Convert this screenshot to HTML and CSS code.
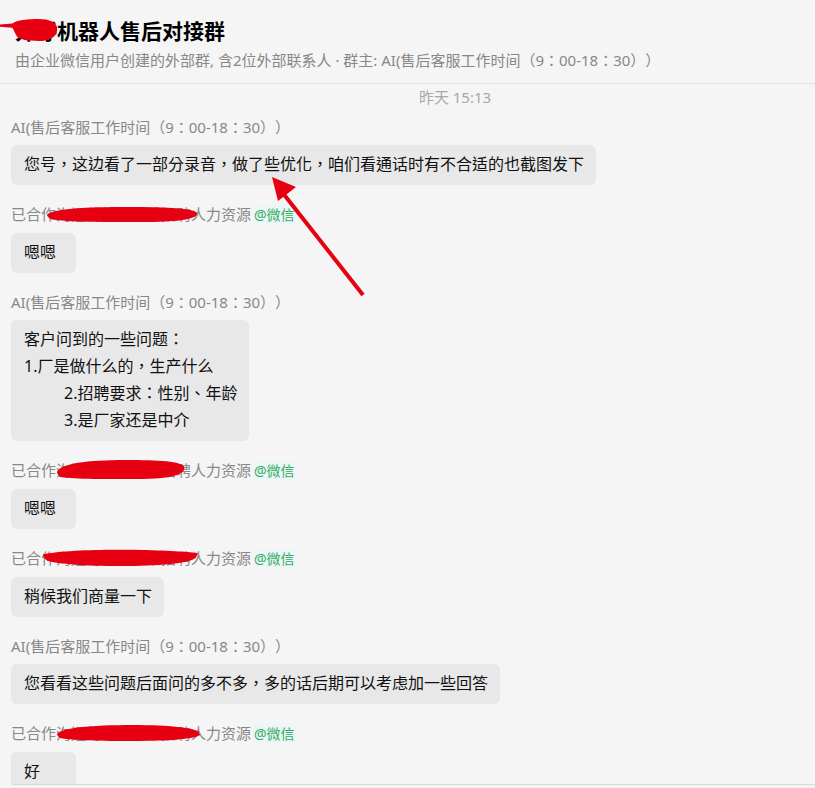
FILE: index.html
```html
<!DOCTYPE html>
<html lang="zh-CN">
<head>
    <meta charset="UTF-8">
    <meta name="viewport" content="width=device-width, initial-scale=1.0">
    <title>群聊</title>
    <link rel="stylesheet" href="styles.css">
</head>
<body>
    <div class="header">
        <div class="title">
            外呼机器人售后对接群
            <svg class="scribble title-scribble" viewBox="0 0 75 20" preserveAspectRatio="none">
                <path d="M0 5 L16 4 C22 1 36 0 50 0 C64 0 74 3 74 9 C74 16 64 20 50 20 C36 20 26 19 22 16 C19 13 18 10 16 8 L0 7 Z" />
            </svg>
        </div>
        <div class="subtitle">由企业微信用户创建的外部群, 含2位外部联系人 · 群主: AI(售后客服工作时间（9：00-18：30））</div>
    </div>

    <div class="chat">
        <div class="time">昨天 15:13</div>

        <div class="message">
            <div class="sender">AI(售后客服工作时间（9：00-18：30））</div>
            <div class="bubble">您号，这边看了一部分录音，做了些优化，咱们看通话时有不合适的也截图发下</div>
        </div>

        <div class="message">
            <div class="sender">
                已合作沟通的某某某某招聘人力资源<span class="tag">@微信</span>
                <svg class="scribble name-scribble s1" viewBox="0 0 150 16" preserveAspectRatio="none">
                    <path d="M0 8 C5 3 30 0 75 0 C115 0 145 1 150 6 C152 11 140 16 100 16 C60 16 20 16 4 13 C1 11 0 10 0 8 Z" />
                </svg>
            </div>
            <div class="bubble">嗯嗯</div>
        </div>

        <div class="message">
            <div class="sender">AI(售后客服工作时间（9：00-18：30））</div>
            <div class="bubble">
                <div>客户问到的一些问题：</div>
                <div>1.厂是做什么的，生产什么</div>
                <div class="indent">2.招聘要求：性别、年龄</div>
                <div class="indent">3.是厂家还是中介</div>
            </div>
        </div>

        <div class="message">
            <div class="sender">
                已合作沟通的某某某某招聘人力资源<span class="tag">@微信</span>
                <svg class="scribble name-scribble s2" viewBox="0 0 150 16" preserveAspectRatio="none">
                    <path d="M0 10 C4 3 35 0 80 0 C120 0 146 1 149 6 C151 12 135 16 95 16 C50 16 15 16 3 14 C1 12 0 11 0 10 Z" />
                </svg>
            </div>
            <div class="bubble">嗯嗯</div>
        </div>

        <div class="message">
            <div class="sender">
                已合作沟通的某某某某招聘人力资源<span class="tag">@微信</span>
                <svg class="scribble name-scribble s3" viewBox="0 0 150 16" preserveAspectRatio="none">
                    <path d="M0 5 C20 1 60 0 100 1 C130 2 145 3 150 4 L148 8 C142 14 110 16 75 16 C40 16 15 14 4 11 C1 9 0 7 0 5 Z" />
                </svg>
            </div>
            <div class="bubble">稍候我们商量一下</div>
        </div>

        <div class="message">
            <div class="sender">AI(售后客服工作时间（9：00-18：30））</div>
            <div class="bubble">您看看这些问题后面问的多不多，多的话后期可以考虑加一些回答</div>
        </div>

        <div class="message">
            <div class="sender">
                已合作沟通的某某某某招聘人力资源<span class="tag">@微信</span>
                <svg class="scribble name-scribble s4" viewBox="0 0 150 16" preserveAspectRatio="none">
                    <path d="M0 9 C4 3 35 0 80 0 C120 0 140 3 148 6 L150 10 C142 15 110 16 75 16 C40 16 12 15 3 13 C1 11 0 10 0 9 Z" />
                </svg>
            </div>
            <div class="bubble">好</div>
        </div>
    </div>

    <div class="composer"></div>

    <!-- annotation arrow -->
    <svg class="arrow" width="815" height="788" viewBox="0 0 815 788">
        <line x1="363" y1="295" x2="282" y2="192" />
        <polygon points="272,177 278,201 296,187" />
    </svg>
</body>
</html>
```

FILE: styles.css
```css
body {
    margin: 0;
    background: #f5f5f5;
    font-family: 'Noto Sans', 'Noto Sans CJK TC', 'Noto Sans CJK SC', sans-serif;
    font-feature-settings: "locl" 0;
    color: #111;
    width: 815px;
    height: 788px;
    overflow: hidden;
    position: relative;
    text-spacing-trim: space-all;
}

.header {
    padding: 17px 15px 13px;
    border-bottom: 1px solid #e1e1e1;
}

.title {
    position: relative;
    font-size: 21px;
    font-weight: bold;
    line-height: 28px;
    color: #000;
}

.subtitle {
    margin-top: 5px;
    font-size: 15px;
    line-height: 20px;
    color: #888;
}

.chat {
    height: 700px;
    overflow: hidden;
    padding-left: 11px;
}

.time {
    margin: 3px 0 11px;
    padding-left: 84px;
    text-align: center;
    font-size: 15px;
    line-height: 20px;
    color: #a8a8a8;
}

.message {
    margin-bottom: 20px;
}

.sender {
    position: relative;
    font-size: 15px;
    line-height: 18px;
    color: #888;
    margin-bottom: 9px;
}

.tag {
    margin-left: 2px;
    padding: 0 1px;
    font-size: 14px;
    color: #2fae5b;
    background: #eef5f9;
}

.bubble {
    display: inline-block;
    min-width: 65px;
    box-sizing: border-box;
    padding: 6px 12px 7px 13px;
    background: #e8e8e8;
    border-radius: 6px;
    font-size: 16px;
    line-height: 27px;
    color: #111;
}

.indent {
    padding-left: 40px;
}

.composer {
    margin-left: 12px;
    border-top: 1px solid #dcdcdc;
    height: 3px;
    background: #f3f3f3;
}

/* red marker strokes over names */
.scribble {
    position: absolute;
    fill: #e60012;
}

.title-scribble {
    left: -15px;
    top: 2px;
    width: 58px;
    height: 22px;
}

.name-scribble {
    left: 36px;
    top: 2px;
    width: 150px;
    height: 15px;
}

.name-scribble.s2 {
    left: 46px;
    top: -1px;
    width: 128px;
    height: 19px;
}

.name-scribble.s3 {
    left: 32px;
    top: 0;
    width: 155px;
    height: 17px;
}

.name-scribble.s4 {
    left: 46px;
    top: 1px;
    width: 143px;
    height: 16px;
}

.arrow {
    position: absolute;
    left: 0;
    top: 0;
    pointer-events: none;
}

.arrow line {
    stroke: #e60012;
    stroke-width: 4;
}

.arrow polygon {
    fill: #e60012;
}
```
